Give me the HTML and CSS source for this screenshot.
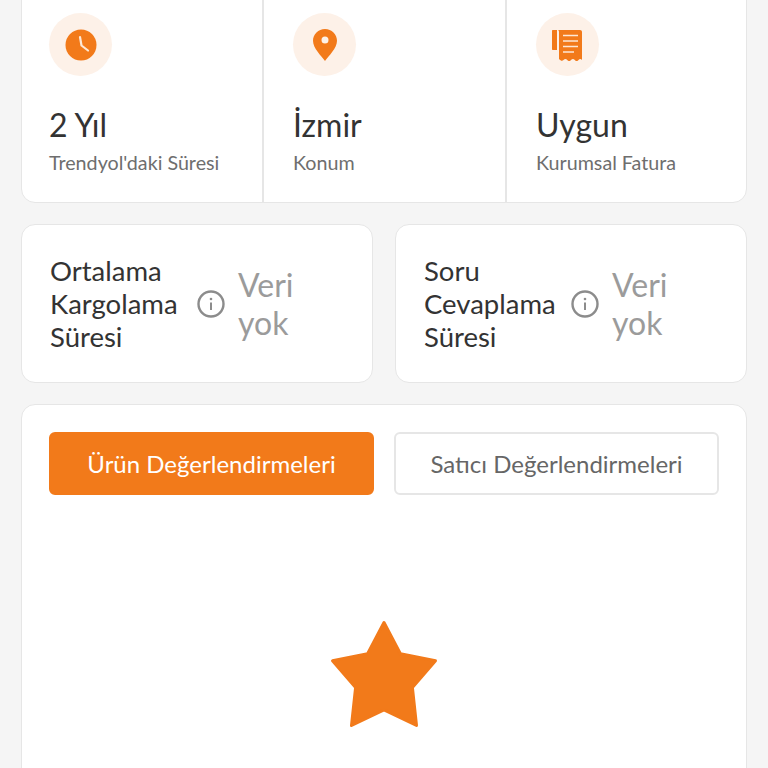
FILE: index.html
```html
<!DOCTYPE html>
<html lang="tr">
<head>
<meta charset="utf-8" />
<title>Satıcı Profili</title>
<link rel="stylesheet" href="styles.css">
</head>

<body>

<div class="page">
    <div class="card facts">
        <div class="fact">
            <div class="fact-icon">
                <svg width="32" height="32" viewBox="0 0 32 32">
                    <circle cx="16" cy="16" r="15.5" fill="#f27a1a" />
                    <path d="M15 8 16.500 16.500 23 21.500" fill="none" stroke="#fde8d6" stroke-width="2.200" stroke-linecap="round" stroke-linejoin="round" />
                </svg>
            </div>
            <div class="fact-value">2 Yıl</div>
            <div class="fact-label">Trendyol'daki Süresi</div>
        </div>
        <div class="fact">
            <div class="fact-icon">
                <svg width="32" height="32" viewBox="0 0 32 32">
                    <path fill-rule="evenodd" fill="#f27a1a" d="M16 0C9.300 0 4 5.200 4 11.800 4 19.500 12.500 27 16 32 19.500 27 28 19.500 28 11.800 28 5.200 22.700 0 16 0ZM16 7.500A3.500 3.500 0 1 1 16 14.500 3.500 3.500 0 0 1 16 7.500Z" />
                </svg>
            </div>
            <div class="fact-value">İzmir</div>
            <div class="fact-label">Konum</div>
        </div>
        <div class="fact">
            <div class="fact-icon">
                <svg width="32" height="32" viewBox="0 0 32 32">
                    <path fill="#f27a1a" d="M1 1H5V21H1C.4 21 0 20.600 0 20V2C0 1.400.4 1 1 1Z" />
                    <path fill="#f27a1a" d="M6 1H28C29.200 1 30 1.800 30 3V31C28.800 29.500 27.600 29.500 26.500 31 25.300 32.400 24 32.400 22.800 31 21.600 29.500 20.300 29.500 19 31 17.800 32.400 16.500 32.400 15.300 31 14.100 29.500 12.800 29.500 11.500 31 10.300 32.400 8.800 32 7 30V3C7 2 6.600 1.300 6 1Z" />
                    <path fill="none" stroke="#fde8d6" stroke-width="1.500" d="M11 6.500H26M11 12H26M11 17.500H26M11 23H22" />
                </svg>
            </div>
            <div class="fact-value">Uygun</div>
            <div class="fact-label">Kurumsal Fatura</div>
        </div>
    </div>

    <div class="stats">
        <div class="card stat">
            <div class="stat-name">Ortalama Kargolama Süresi</div>
            <svg class="stat-info" width="28" height="28" viewBox="0 0 28 28">
                <circle cx="14" cy="14" r="12.500" fill="none" stroke="#8c8c8c" stroke-width="2.400" />
                <circle cx="14" cy="9" r="1.300" fill="#8c8c8c" />
                <path d="M14 12.500V20" stroke="#8c8c8c" stroke-width="2" />
            </svg>
            <div class="stat-value">Veri yok</div>
        </div>
        <div class="card stat">
            <div class="stat-name">Soru Cevaplama Süresi</div>
            <svg class="stat-info" width="28" height="28" viewBox="0 0 28 28">
                <circle cx="14" cy="14" r="12.500" fill="none" stroke="#8c8c8c" stroke-width="2.400" />
                <circle cx="14" cy="9" r="1.300" fill="#8c8c8c" />
                <path d="M14 12.500V20" stroke="#8c8c8c" stroke-width="2" />
            </svg>
            <div class="stat-value">Veri yok</div>
        </div>
    </div>

    <div class="card reviews">
        <div class="tabs">
            <button class="tab tab-active">Ürün Değerlendirmeleri</button>
            <button class="tab">Satıcı Değerlendirmeleri</button>
        </div>
        <div class="empty">
            <svg width="108" height="108" viewBox="0 0 108 108">
                <path fill="#f27a1a" stroke="#f27a1a" stroke-width="3" stroke-linejoin="round" d="M54 2.500 70.400 33.800 105.500 40.800 82.400 67.500 86.500 105.500 54 90 21.500 105.500 25.600 67.500 2.500 40.800 37.600 33.800Z" />
            </svg>
        </div>
    </div>
</div>

</body>
</html>
```

FILE: styles.css
```css
html, body {
    height: 768px;
    margin: 0;
    overflow: hidden;
}

body {
    background: #f5f5f5;
    color: #333;
    font-family: Lato, "Noto Sans", sans-serif;
}

.page {
    display: flex;
    flex-direction: column;
    gap: 21px;
    height: 788px;
    margin-top: -20px;
    overflow: hidden;
    padding: 0 21px;
}

.card {
    background: #fff;
    border: 1px solid #e6e6e6;
    border-radius: 14px;
    box-sizing: border-box;
}

.facts {
    display: grid;
    flex: none;
    grid-template-columns: 240px 243px 1fr;
    height: 223px;
}

.fact {
    border-left: 2px solid #e6e6e6;
    padding: 32px 0 0 29px;
}

.fact:first-child {
    border-left: 0;
    padding-left: 27px;
}

.fact-icon {
    align-items: center;
    background: #fdf1e8;
    border-radius: 50%;
    display: flex;
    height: 63px;
    justify-content: center;
    width: 63px;
}

.fact-value {
    font-size: 32px;
    line-height: 40px;
    margin-top: 29px;
}

.fact-label {
    color: #6e6e6e;
    font-size: 19.7px;
    line-height: 24px;
    margin-top: 6px;
}

.stats {
    display: grid;
    flex: none;
    gap: 22px;
    grid-template-columns: 352px 1fr;
}

.stat {
    align-items: center;
    display: flex;
    height: 159px;
    padding: 0 0 0 28px;
}

.stat-name {
    font-size: 27.5px;
    line-height: 33px;
    width: 134px;
}

.stat-info {
    flex: none;
    margin-left: 13px;
}

.stat-value {
    color: #9b9b9b;
    font-size: 32px;
    line-height: 38px;
    margin-left: 13px;
    width: 70px;
}

.reviews {
    flex: none;
    height: 500px;
    padding: 27px;
}

.tabs {
    display: flex;
    gap: 20px;
}

.tab {
    background: #fff;
    border: 2px solid #e6e6e6;
    border-radius: 6px;
    color: #666;
    flex: none;
    font-family: inherit;
    font-size: 24px;
    height: 63px;
    padding: 0;
    width: 325px;
}

.tab-active {
    background: #f27a1a;
    border-color: #f27a1a;
    color: #fff;
}

.empty {
    display: flex;
    justify-content: center;
    padding-top: 125px;
}
```
